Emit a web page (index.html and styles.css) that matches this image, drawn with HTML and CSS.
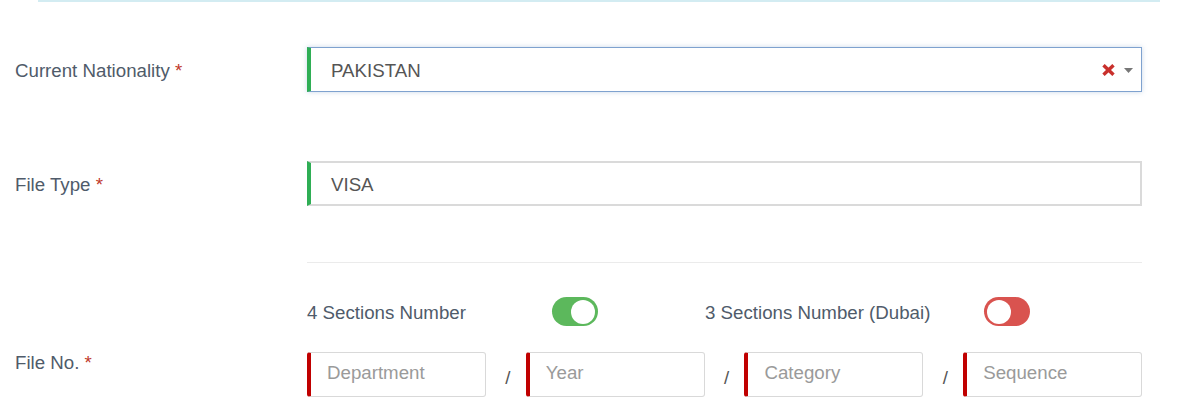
FILE: index.html
```html
<!DOCTYPE html>
<html>
<head>
<meta charset="utf-8">
<link rel="stylesheet" href="styles.css">
</head>
<body>
<div class="topline"></div>
<div class="form">
  <div class="row row-nat">
    <label class="lbl">Current Nationality <span class="req">*</span></label>
    <div class="select">
      <span class="select-val">PAKISTAN</span>
      <span class="select-icons">
        <svg class="clear" width="13" height="12" viewBox="0 0 13 12"><path d="M1.5 1.2 L11.5 10.8 M11.5 1.2 L1.5 10.8" stroke="#c9302c" stroke-width="3.4" stroke-linecap="butt"/></svg>
        <svg class="caret" width="9" height="5" viewBox="0 0 9 5"><path d="M0 0 H9 L4.5 5 Z" fill="#777"/></svg>
      </span>
    </div>
  </div>
  <div class="row row-type">
    <label class="lbl">File Type <span class="req">*</span></label>
    <div class="input input-green">VISA</div>
  </div>
  <div class="row row-divider">
    <div></div>
    <div class="divider"></div>
  </div>
  <div class="row row-toggles">
    <div></div>
    <div class="toggles">
      <div class="tgroup tgroup-1">
        <span class="tlabel">4 Sections Number</span>
        <span class="switch on"><span class="knob"></span></span>
      </div>
      <div class="tgroup tgroup-2">
        <span class="tlabel">3 Sections Number (Dubai)</span>
        <span class="switch off"><span class="knob"></span></span>
      </div>
    </div>
  </div>
  <div class="row row-fileno">
    <label class="lbl lbl-top">File No. <span class="req">*</span></label>
    <div class="parts">
      <div class="part">Department</div>
      <span class="slash">/</span>
      <div class="part">Year</div>
      <span class="slash">/</span>
      <div class="part">Category</div>
      <span class="slash">/</span>
      <div class="part">Sequence</div>
    </div>
  </div>
</div>
</body>
</html>
```

FILE: styles.css
```css
* { box-sizing: border-box; }
body {
  margin: 0;
  background: #fff;
  font-family: "Liberation Sans", Arial, sans-serif;
  font-size: 18.7px;
  color: #555;
}
.topline {
  margin: 0 37px 0 38px;
  height: 2px;
  background: #d3ecf2;
}
.form {
  padding-top: 45px;
}
.row {
  display: grid;
  grid-template-columns: 307px 835px;
  align-items: center;
}
.lbl {
  padding-left: 15px;
  padding-top: 3px;
  color: #4f5b6a;
  line-height: 22px;
}
.req { color: #c0392b; }
.row-type { margin-top: 69px; }
.select {
  height: 45px;
  border: 1px solid #7fa2cf;
  border-left: 4px solid #2fae55;
  box-shadow: 0 0 5px rgba(102, 140, 190, 0.35);
  display: flex;
  align-items: center;
  justify-content: space-between;
  padding: 2px 8px 0 20px;
}
.select-val { color: #555; }
.select-icons {
  display: flex;
  align-items: center;
  gap: 9px;
  margin-top: -2px;
}
.clear { display: block; }
.caret { display: block; margin-top: 1px; }
.input {
  height: 45px;
  border: 2px solid #dadada;
  display: flex;
  align-items: center;
  padding: 2px 0 0 20px;
  color: #555;
}
.input-green { border-left: 4px solid #2fae55; }
.row-divider { margin-top: 56px; }
.divider {
  height: 1px;
  background: #ebebeb;
}
.row-toggles { margin-top: 34px; }
.toggles {
  display: flex;
  align-items: center;
}
.tgroup {
  display: flex;
  align-items: center;
}
.tgroup-1 { width: 398px; }
.tgroup-1 .tlabel { width: 245px; }
.tgroup-2 .tlabel { width: 279px; }
.tlabel { color: #4f5b6a; padding-top: 2px; }
.switch {
  width: 46px;
  height: 29px;
  border-radius: 15px;
  display: flex;
  align-items: center;
  padding: 0 3px;
}
.switch.on { background: #5cb85c; justify-content: flex-end; }
.switch.off { background: #d9534f; justify-content: flex-start; }
.knob {
  width: 24px;
  height: 24px;
  border-radius: 50%;
  background: #fff;
}
.row-fileno { margin-top: 26px; align-items: start; }
.lbl-top { padding-top: 0; }
.parts {
  display: flex;
  align-items: stretch;
}
.part {
  width: 179px;
  height: 45px;
  border: 1px solid #d9d9d9;
  border-left: 4px solid #c00000;
  border-radius: 3px;
  display: flex;
  align-items: center;
  padding: 0 0 3px 16px;
  color: #9a9a9a;
}
.slash {
  width: 40px;
  text-align: center;
  align-self: flex-end;
  padding-bottom: 8px;
  padding-left: 4px;
  color: #555;
  line-height: 22px;
}
```
